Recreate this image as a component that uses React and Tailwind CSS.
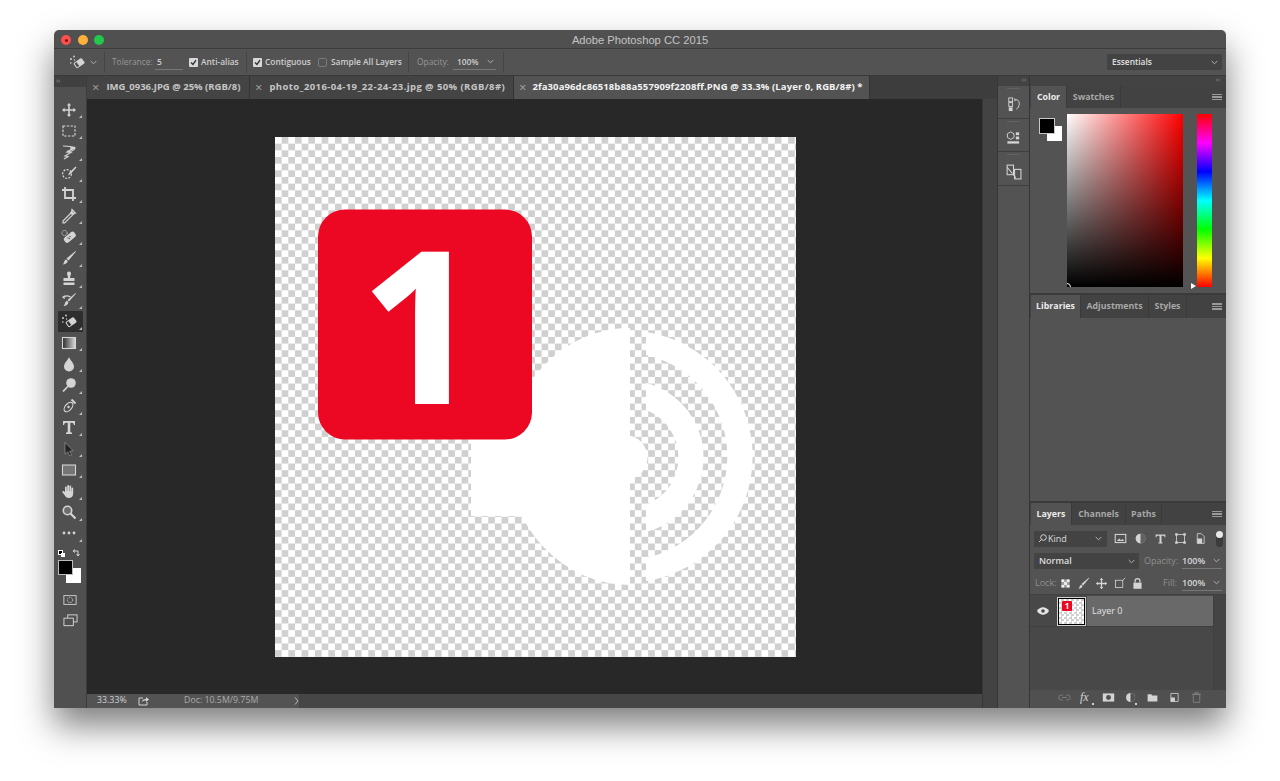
import React from "react";

const I = ({ children, s = 16, className = "" }) => (
  <svg width={s} height={s} viewBox="0 0 16 16" className={"shrink-0 " + className} fill="#d4d4d4" stroke="none">{children}</svg>
);
const line = { fill: "none", stroke: "#d4d4d4", strokeWidth: 1.2 };

const magic = (
  <g>
    <g transform="rotate(-35 10 9)">
      <rect x="5.500" y="6.500" width="9" height="5.500" rx="1" fill="none" stroke="#d4d4d4" />
      <rect x="8.500" y="6.500" width="6" height="5.500" rx="1" />
    </g>
    <circle cx="2" cy="5" r="1" />
    <circle cx="5" cy="2.500" r=".9" />
    <circle cx="1.800" cy="9" r=".8" />
    <circle cx="5.500" cy="6" r=".7" />
  </g>
);

const tools = [
  <path d="M8 1l2.200 2.600H8.800v3.600h3.600V5.800L15 8l-2.600 2.200V8.800H8.800v3.600h1.400L8 15l-2.200-2.600h1.400V8.800H3.600v1.400L1 8l2.600-2.200v1.400h3.600V3.600H5.800z" />,
  <rect x="2" y="3" width="12" height="10" fill="none" stroke="#d4d4d4" strokeWidth="1.200" strokeDasharray="2.400 1.400" />,
  <g><path d="M2 2c4 0 9 0 12 2-1 3-5 4-8 3" {...line} /><path d="M14 3l-8 5 4 .5-6 3.500 3 .5L3 15" {...line} /><path d="M9 3.500c2-1 4-1 5 .5l-4 2.500z" /></g>,
  <g><circle cx="6" cy="9" r="4.400" fill="none" stroke="#d4d4d4" strokeWidth="1.200" strokeDasharray="2 1.300" /><path d="M14.500 1.500l1 1-6 6.500-2.500 1.500 1-2.600z" /></g>,
  <g><path d="M4 1v11h11M1 4h11v11" fill="none" stroke="#d4d4d4" strokeWidth="1.800" /></g>,
  <g><path d="M11 1.500l3.500 3.500-2 1-.8.8-8 8H2v-1.800l8-8 .7-.7z" fill="none" stroke="#d4d4d4" strokeWidth="1.200" /><path d="M10.500 2.500l3 3-2.500 1.500-2-2z" /></g>,
  <g><rect x="2" y="5.500" width="13" height="6.400" rx="2.400" transform="rotate(-40 8 8)" /><circle cx="7" cy="9" r=".7" fill="#505050" /><circle cx="9" cy="7.500" r=".7" fill="#505050" /><circle cx="8.400" cy="9.600" r=".7" fill="#505050" /><circle cx="3.500" cy="4" r="2.600" fill="none" stroke="#d4d4d4" strokeDasharray="1.400 1" /></g>,
  <path d="M14.500 1L15 1.600 7.500 10.500 5.500 8.600zM5 9.400l1.800 1.700C6.500 13.500 4 14.500 1.500 14.500 3.400 13.400 3 10 5 9.400z" />,
  <path d="M6 2.500a2 2 0 014 0c0 1.600-1 2.400-1 4.500h4.500v3h-11V7H7c0-2.100-1-2.900-1-4.500zM2.500 11.500h11V14h-11z" />,
  <g><path d="M14.500 1L15 1.600 8 9.500 6.500 8zM6 8.800l1.400 1.400C7.200 12.500 5 14 2.500 14 4 13 4 9.300 6 8.800z" /><path d="M1.500 5.500C4 3.500 7 3.500 9.500 5M1.500 5.500l2.300-1.800M1.500 5.500l2.600.6" {...line} /></g>,
  magic,
  <g><rect x="1.500" y="2.500" width="13" height="11" fill="url(#gr)" stroke="#d4d4d4" strokeWidth="1.100" /></g>,
  <path d="M8 1c1 3 5 6 5 9.500a5 5 0 01-10 0C3 7 7 4 8 1z" />,
  <g><circle cx="10" cy="6" r="4.800" /><path d="M6.800 9.500L2 14.500" stroke="#d4d4d4" strokeWidth="1.800" /></g>,
  <g><ellipse cx="7.500" cy="9" rx="3.200" ry="5.600" transform="rotate(40 7.500 9)" {...line} /><circle cx="7.500" cy="9" r="1.200" /><path d="M10.500 1.500l4 4" stroke="#d4d4d4" strokeWidth="2" /></g>,
  <path d="M2 2h12v4h-1.100c-.2-1.600-.8-2.300-2.400-2.300H9.300v8.800c0 .8.500 1 1.700 1V15H5v-1.500c1.200 0 1.700-.2 1.700-1V3.700H5.500c-1.600 0-2.200.7-2.400 2.300H2z" />,
  <path d="M4 1.500l.1 11.600 2.700-2.400 2 4.300 1.800-.9-2-4.100 3.500-.3z" stroke="#d4d4d4" strokeWidth=".4" fill="#222" />,
  <rect x="1.500" y="3" width="13" height="10" fill="#757575" stroke="#d4d4d4" strokeWidth="1.100" />,
  <path d="M4 9V4.500a.9.900 0 011.800 0V8h.4V2.800a.9.900 0 011.800 0V8h.4V3.300a.9.900 0 011.800 0V8.400h.3V5a.9.900 0 011.700 0v5.500c0 3-2 4.500-4.500 4.500-2.100 0-3-1-4-2.700L1.500 9.400c-.6-1 .8-1.900 1.500-1z" />,
  <g><circle cx="6.500" cy="6.500" r="4.200" fill="#6d6d6d" stroke="#d4d4d4" strokeWidth="1.600" /><path d="M9.500 9.500l5 5" stroke="#d4d4d4" strokeWidth="2.200" /></g>,
  <g><circle cx="3" cy="8" r="1.400" /><circle cx="8" cy="8" r="1.400" /><circle cx="13" cy="8" r="1.400" /></g>,
];

function Tool({ children, active }) {
  return (
    <div className={"relative w-[25px] h-[21.2px] flex items-center justify-center rounded-[1px] " + (active ? "bg-[#2e2e2e]" : "")}>
      <I className="-translate-x-[1px]">{children}</I>
      <div className="absolute right-[1px] bottom-[2px] w-0 h-0 border-l-[3px] border-l-transparent border-b-[3px] border-b-[#c0c0c0]" />
    </div>
  );
}

function Toolbar() {
  return (
    <div className="w-[33px] shrink-0 bg-[#505050] border-r border-[#3c3c3c] flex flex-col items-center">
      <svg width="0" height="0" className="absolute">
        <defs>
          <linearGradient id="gr"><stop offset="0" stopColor="#2a2a2a" /><stop offset="1" stopColor="#dddddd" /></linearGradient>
        </defs>
      </svg>
      <div className="self-stretch h-[11px] bg-[#404040] text-[7px] leading-[9px] pl-[2px] text-[#999]">››</div>
      <div className="h-[12px]" />
      <div className="flex flex-col items-center">
        {tools.map((t, i) => (
          <Tool key={i} active={i === 10}>{t}</Tool>
        ))}
      </div>
      <div className="self-stretch relative h-[36px] mt-[4px]">
        <div className="absolute left-[4px] top-[2px] w-[5px] h-[5px] bg-black border border-white" />
        <div className="absolute left-[7px] top-[5px] w-[4px] h-[4px] bg-white" />
        <svg width="9" height="9" viewBox="0 0 9 9" className="absolute left-[18px] top-[1px]"><path d="M1 2h5v5M1 2l2-1.500M1 2l2 1.500M6 7L4.500 5M6 7l1.500-2" fill="none" stroke="#d4d4d4" /></svg>
        <div className="absolute left-[12px] top-[20px] w-[15px] h-[15px] bg-white" />
        <div className="absolute left-[4px] top-[12px] w-[15px] h-[15px] bg-black border border-[#bdbdbd]" />
      </div>
      <div className="h-[9px]" />
      <I s={14}><rect x="1" y="3" width="14" height="10" fill="none" stroke="#d4d4d4" /><circle cx="8" cy="8" r="3" fill="none" stroke="#d4d4d4" strokeDasharray="1.500 1" /></I>
      <div className="h-[6px]" />
      <I s={15}><rect x="5" y="2" width="10" height="7.500" fill="none" stroke="#d4d4d4" /><rect x="1" y="5.500" width="10" height="8" fill="#505050" stroke="#d4d4d4" /></I>
    </div>
  );
}

function Chevron({ className = "" }) {
  return (
    <svg width="7" height="5" viewBox="0 0 7 5" className={"shrink-0 " + className}><path d="M.7 1l2.800 2.800L6.300 1" fill="none" stroke="#b0b0b0" strokeWidth="1" /></svg>
  );
}

function Check() {
  return (
    <div className="w-[9px] h-[9px] shrink-0 rounded-[1px] bg-[#d8d8d8] flex items-center justify-center">
      <svg width="7" height="7" viewBox="0 0 7 7"><path d="M1 3.500l2 2L6 1.200" fill="none" stroke="#333" strokeWidth="1.400" /></svg>
    </div>
  );
}

function Divider({ ml, mr }) {
  return <div className={"w-px h-[21px] shrink-0 bg-[#454545] " + ml + " " + mr} />;
}

function OptionsBar() {
  return (
    <div className="h-[27px] shrink-0 bg-[#535353] border-b border-[#3a3a3a] flex items-center text-[8.400px] font-semibold text-[#cfcfcf] whitespace-nowrap">
      <div className="ml-[15px]"><I s={16}>{tools[10]}</I></div>
      <Chevron className="ml-[5px]" />
      <Divider ml="ml-[7px]" mr="mr-[7px]" />
      <span className="font-normal text-[#979797] w-[43px]">Tolerance:</span>
      <span className="w-[28px] border-b border-[#777] leading-[14px] pl-[2px]">5</span>
      <div className="w-[6px]" />
      <Check />
      <span className="ml-[3px] w-[40px]">Anti-alias</span>
      <Divider ml="ml-[5px]" mr="mr-[6px]" />
      <Check />
      <span className="ml-[3px] w-[49px]">Contiguous</span>
      <div className="ml-[4px] w-[9px] h-[9px] rounded-[2px] border border-[#7a7a7a]" />
      <span className="ml-[4px] w-[71px]">Sample All Layers</span>
      <Divider ml="ml-[6px]" mr="mr-[8px]" />
      <span className="font-normal text-[#979797] w-[36px]">Opacity:</span>
      <div className="w-[43px] border-b border-[#777] leading-[14px] pl-[4px] flex items-center justify-between pr-[2px]">
        <span>100%</span>
        <Chevron />
      </div>
      <Divider ml="ml-[7px]" mr="mr-0" />
      <div className="flex-1" />
      <div className="w-[115px] h-[16px] mr-[4px] bg-[#434343] rounded-[1px] flex items-center justify-between pl-[5px] pr-[4px] text-[#e0e0e0]">
        <span>Essentials</span>
        <Chevron />
      </div>
    </div>
  );
}

function DocTab({ w, label, active, gap }) {
  return (
    <div className={"h-[23px] flex items-center shrink-0 border-r border-[#333] text-[9.500px] font-bold whitespace-nowrap " + w + " " + (active ? "bg-[#535353] text-[#f2f2f2]" : "bg-[#444444] text-[#c6c6c6]")}>
      <span className="ml-[5px] text-[13px] font-normal text-[#a0a0a0] leading-none">×</span>
      <span className={gap}>{label}</span>
    </div>
  );
}

function Artwork() {
  return (
    <div className="w-[521px] h-[520px] shrink-0 ml-[188px] mt-[38px] bg-white bg-[repeating-conic-gradient(#d0d0d0_0_25%,#ffffff_0_50%)] bg-[length:13.33px_13.33px]">
      <svg width="521" height="520" viewBox="275 137 521 520" className="block">
        <path d="M471 430h70v86h-70z" fill="#fff" />
        <path d="M630 328A122 128.500 0 0 0 630 585z" fill="#fff" />
        <path d="M625 435a22 22 0 0 1 0 45z" fill="#fff" />
        <path d="M646 332A126 126 0 0 1 646 581V558A104 104 0 0 0 646 355z" fill="#fff" />
        <path d="M646 383A77 77 0 0 1 646 532V505A51 51 0 0 0 646 410z" fill="#fff" />
        <rect x="318" y="209.500" width="214" height="230" rx="27" fill="#ec0823" />
        <text x="421" y="403" textAnchor="middle" fontFamily="'Open Sans', sans-serif" fontWeight="700" fontSize="211" fill="#fff" stroke="#fff" strokeWidth="2">1</text>
      </svg>
    </div>
  );
}

function DocArea() {
  return (
    <div className="w-[910px] shrink-0 flex flex-col">
      <div className="h-[23px] shrink-0 flex bg-[#3d3d3d]">
        <DocTab w="w-[163px]" label="IMG_0936.JPG @ 25% (RGB/8)" gap="ml-[7px]" />
        <DocTab w="w-[264px]" label="photo_2016-04-19_22-24-23.jpg @ 50% (RGB/8#)" gap="ml-[7px] tracking-[0.4px]" />
        <DocTab w="w-[356px]" label="2fa30a96dc86518b88a557909f2208ff.PNG @ 33.3% (Layer 0, RGB/8#) *" active gap="ml-[6px] tracking-[0.1px]" />
      </div>
      <div className="flex-1 flex min-h-0 overflow-hidden">
        <div className="w-[895px] flex flex-col shrink-0">
          <div className="flex-1 bg-[#282828] min-h-0 flex items-start">
            <Artwork />
          </div>
          <div className="h-[14px] shrink-0 bg-[#464646] flex">
            <div className="w-[213px] bg-[#535353] border-r border-[#444] flex items-center text-[8.800px] text-[#cfcfcf]">
              <span className="ml-[10px] w-[41px]">33.33%</span>
              <svg width="11" height="10" viewBox="0 0 11 10"><path d="M5 2H1v7h8V6" fill="none" stroke="#d4d4d4" /><path d="M4 6c0-2 1.500-3 4-3V1l3 2.500L8 6V4.500c-2 0-3 .5-4 1.500z" fill="#d4d4d4" /></svg>
              <span className="ml-[35px] w-[110px] text-[#aaa]">Doc: 10.5M/9.75M</span>
              <svg width="5" height="8" viewBox="0 0 5 8"><path d="M1 .5L4 4 1 7.500" fill="none" stroke="#bbb" /></svg>
            </div>
          </div>
        </div>
        <div className="w-[15px] bg-[#434343] border-l border-[#363636]" />
      </div>
    </div>
  );
}

function DockGroup({ children, h = "h-[33px]" }) {
  return (
    <div className={"border-b border-[#3e3e3e] flex items-center justify-center pt-[5px] relative " + h}>
      <div className="absolute top-[2px] left-[9px] w-[13px] h-[1px] bg-[#626262]" />
      {children}
    </div>
  );
}

function Dock() {
  return (
    <div className="w-[33px] shrink-0 bg-[#535353] border-l border-[#363636] border-r flex flex-col">
      <div className="h-[10px] bg-[#434343] text-[7px] leading-[8px] text-[#999] text-right pr-[3px]">‹‹</div>
      <DockGroup>
        <I s={15}><rect x="3" y="1" width="4" height="4" fill="none" stroke="#d4d4d4" /><rect x="3" y="6" width="4" height="4" fill="none" stroke="#d4d4d4" /><rect x="3" y="11" width="4" height="4" /><path d="M9 3h3M10 3l-1 1.500M10 3L9 1.500M12 3c3 1 3 8-1 10" fill="none" stroke="#d4d4d4" /></I>
      </DockGroup>
      <DockGroup>
        <I s={15}><path d="M5 2l3.500 2v4L5 10 1.500 8V4z" fill="none" stroke="#d4d4d4" /><rect x="10.500" y="2.500" width="3.500" height="3" /><rect x="10.500" y="7" width="3.500" height="3" /><rect x="1.500" y="12" width="12.500" height="2.500" /></I>
      </DockGroup>
      <DockGroup h="h-[34px]">
        <I s={17}><rect x="2" y="2" width="6" height="9" fill="none" stroke="#d4d4d4" /><rect x="9" y="6" width="6" height="9" fill="none" stroke="#d4d4d4" /><path d="M2 4l5 6M8 11l2 3" fill="none" stroke="#d4d4d4" /></I>
      </DockGroup>
    </div>
  );
}

function Menu() {
  return (
    <div className="flex flex-col gap-[1px] w-[10px]">
      <div className="h-[1.500px] bg-[#9a9a9a]" />
      <div className="h-[1.500px] bg-[#9a9a9a]" />
      <div className="h-[1.500px] bg-[#9a9a9a]" />
    </div>
  );
}

function PanelTabs({ tabs, h = "h-[23px]" }) {
  return (
    <div className={"shrink-0 flex items-stretch bg-[#424242] text-[8.800px] font-bold pl-[1px] " + h}>
      {tabs.map(([label, w], i) => (
        <div key={label} className={"flex items-center justify-center border-r border-[#3a3a3a] pt-[1px] " + w + " " + (i === 0 ? "bg-[#535353] text-[#ececec]" : "text-[#a8a8a8]")}>{label}</div>
      ))}
      <div className="flex-1" />
      <div className="flex items-center pr-[4px]"><Menu /></div>
    </div>
  );
}

function ColorPanel() {
  return (
    <div className="h-[207px] shrink-0 flex flex-col bg-[#535353]">
      <PanelTabs h="h-[22px]" tabs={[["Color", "w-[36px]"], ["Swatches", "w-[54px]"]]} />
      <div className="flex-1 flex pt-[6px] pb-[6px]">
        <div className="relative w-[37px] shrink-0">
          <div className="absolute left-[17px] top-[12px] w-[15px] h-[15px] bg-white" />
          <div className="absolute left-[9px] top-[4px] w-[16px] h-[16px] bg-black border border-[#c8c8c8]" />
        </div>
        <div className="relative w-[116px] shrink-0 overflow-hidden bg-[linear-gradient(to_top,#000,transparent),linear-gradient(to_right,#fff,#f00)]">
          <div className="absolute -left-[4px] -bottom-[4px] w-[8px] h-[8px] rounded-full border border-white" />
        </div>
        <div className="relative w-[15px] ml-[14px] shrink-0 bg-[linear-gradient(to_bottom,#f00,#f0f,#00f,#0ff,#0f0,#ff0,#f00)]">
          <div className="absolute -left-[6px] -bottom-[2px] w-0 h-0 border-y-[3px] border-y-transparent border-l-[5px] border-l-white" />
        </div>
      </div>
    </div>
  );
}

const Glyph = ({ children, className = "" }) => <I s={13} className={className}>{children}</I>;

function LayersPanel() {
  return (
    <div className="flex-1 min-h-0 flex flex-col bg-[#535353]">
      <PanelTabs h="h-[22px]" tabs={[["Layers", "w-[41px]"], ["Channels", "w-[54px]"], ["Paths", "w-[36px]"]]} />
      <div className="h-[25px] shrink-0 flex items-center pl-[4px] pt-[2px]">
        <div className="w-[73px] h-[16px] bg-[#434343] flex items-center pl-[4px] pr-[5px] text-[9px] text-[#dedede] justify-between">
          <span className="flex items-center gap-[1px]">
            <svg width="9" height="9" viewBox="0 0 9 9"><circle cx="5.500" cy="3.500" r="2.800" fill="none" stroke="#d4d4d4" /><path d="M3.500 5.500L1 8" stroke="#d4d4d4" /></svg>
            Kind
          </span>
          <Chevron />
        </div>
        <div className="ml-[7px] flex items-center gap-[7px]">
          <Glyph><rect x="1.500" y="3" width="13" height="10" fill="none" stroke="#d4d4d4" strokeWidth="1.300" /><path d="M3.500 11l3-3 2 2 2-1.500 2 2.500z" /></Glyph>
          <Glyph><circle cx="8" cy="8" r="6" /><path d="M8 2a6 6 0 010 12z" fill="#606060" /></Glyph>
          <Glyph><path d="M2 3h12v3.500h-1c-.2-1.500-.8-2-2-2H9.200v7.800c0 .6.400.7 1.300.7V14h-5v-1c.9 0 1.300-.1 1.300-.7V4.500H5c-1.200 0-1.800.5-2 2H2z" /></Glyph>
          <Glyph><rect x="3" y="3" width="10" height="10" fill="none" stroke="#d4d4d4" /><rect x="1.500" y="1.500" width="3" height="3" /><rect x="11.500" y="1.500" width="3" height="3" /><rect x="1.500" y="11.500" width="3" height="3" /><rect x="11.500" y="11.500" width="3" height="3" /></Glyph>
          <Glyph><path d="M4 2h5l3.500 3.500V14H4z" fill="none" stroke="#d4d4d4" /><rect x="4" y="8" width="6" height="6" /></Glyph>
        </div>
        <div className="ml-[9px] relative w-[7px] h-[16px] rounded-full bg-[#3c3c3c]">
          <div className="absolute left-0 top-0 w-[7px] h-[7px] rounded-full bg-[#e8e8e8]" />
        </div>
      </div>
      <div className="h-[22px] shrink-0 flex items-center pl-[4px] text-[9px]">
        <div className="w-[105px] h-[16px] bg-[#434343] flex items-center pl-[5px] pr-[4px] text-[#dedede] justify-between font-semibold">
          <span>Normal</span>
          <Chevron />
        </div>
        <span className="ml-[5px] w-[38px] text-[#8f8f8f]">Opacity:</span>
        <div className="w-[40px] border-b border-[#777] flex items-center justify-between pr-[2px] text-[#d8d8d8] font-semibold leading-[14px]">
          <span>100%</span>
          <Chevron />
        </div>
      </div>
      <div className="h-[22px] shrink-0 flex items-center pl-[5px] text-[9px]">
        <span className="text-[#8f8f8f] w-[24px]">Lock:</span>
        <div className="flex items-center gap-[5px]">
          <Glyph><path d="M3 3h10v10H3z" fill="#a0a0a0" /><path d="M3 3h3.300v3.300H3zM9.600 3H13v3.300H9.600zM6.300 6.300h3.300v3.400H6.300zM3 9.700h3.300V13H3zM9.600 9.700H13V13H9.600z" fill="#f0f0f0" /></Glyph>
          <Glyph><path d="M14.500 1L15 1.600 7.500 10.500 5.500 8.600zM5 9.400l1.800 1.700C6.500 13.500 4 14.500 1.500 14.500 3.400 13.400 3 10 5 9.400z" /></Glyph>
          <Glyph>{tools[0]}</Glyph>
          <Glyph><rect x="3" y="4" width="9" height="9" fill="none" stroke="#d4d4d4" /><path d="M12 4l3-3" stroke="#d4d4d4" /></Glyph>
          <Glyph><rect x="3" y="7" width="10" height="7.500" /><path d="M5 7V5a3 3 0 016 0v2" fill="none" stroke="#d4d4d4" strokeWidth="1.500" /></Glyph>
        </div>
        <span className="ml-[19px] w-[19px] text-[#8f8f8f]">Fill:</span>
        <div className="w-[40px] border-b border-[#777] flex items-center justify-between pr-[2px] text-[#d8d8d8] font-semibold leading-[14px]">
          <span>100%</span>
          <Chevron />
        </div>
      </div>
      <div className="flex-1 min-h-0 flex bg-[#484848] border-t border-[#414141]">
        <div className="flex-1 min-w-0">
          <div className="h-[31px] flex items-stretch mt-[1px] border-b border-[#3f3f3f]">
            <div className="w-[26px] flex items-center justify-center">
              <svg width="12" height="8" viewBox="0 0 12 8"><path d="M0 4c3-5 9-5 12 0-3 5-9 5-12 0z" fill="#e6e6e6" /><circle cx="6" cy="4" r="1.800" fill="#484848" /></svg>
            </div>
            <div className="w-[31px] flex items-center justify-center">
              <div className="relative w-[27px] h-[27px] border border-black outline outline-1 outline-[#d0d0d0] bg-white bg-[repeating-conic-gradient(#d0d0d0_0_25%,#ffffff_0_50%)] bg-[length:5px_5px]">
                <div className="absolute left-[3px] top-[2px] w-[10px] h-[10px] bg-[#ec0823] rounded-[1px] flex items-center justify-center text-[8px] font-bold leading-none text-white">1</div>
              </div>
            </div>
            <div className="flex-1 bg-[#696969] flex items-center pl-[5px] text-[9px] text-[#e4e4e4]">Layer 0</div>
          </div>
        </div>
        <div className="w-[13px] shrink-0 bg-[#444444] border-l border-[#3f3f3f]" />
      </div>
      <div className="h-[18px] shrink-0 bg-[#505050] flex items-center pl-[28px] pb-[4px] gap-[9px]">
        <Glyph className="opacity-40"><path d="M6 5H4a3 3 0 000 6h2M10 5h2a3 3 0 010 6h-2M5 8h6" fill="none" stroke="#d4d4d4" /></Glyph>
        <span className="relative w-[13px] font-['Liberation_Serif',serif] italic text-[12px] leading-none text-[#d4d4d4]">
          fx
          <span className="absolute -right-[1px] -bottom-[2px] w-[2px] h-[2px] rounded-full bg-white" />
        </span>
        <Glyph><rect x="1" y="3" width="14" height="10" /><circle cx="8" cy="8" r="3" fill="#505050" /></Glyph>
        <span className="relative">
          <Glyph><circle cx="8" cy="8" r="5.500" /><path d="M8 2.500a5.500 5.500 0 010 11z" fill="#505050" /></Glyph>
          <span className="absolute right-0 -bottom-[1px] w-[2px] h-[2px] rounded-full bg-white" />
        </span>
        <Glyph><path d="M2 4h4.500l1.200 1.500H14V13H2z" /></Glyph>
        <Glyph><path d="M3.500 3h9v10h-9z" fill="none" stroke="#d4d4d4" /><rect x="3.500" y="8" width="5" height="5" /></Glyph>
        <Glyph className="opacity-40"><path d="M4 4h8v10H4zM2.500 4h11M6 4V2h4v2" fill="none" stroke="#d4d4d4" /></Glyph>
      </div>
    </div>
  );
}

function RightPanels() {
  return (
    <div className="flex-1 min-w-0 flex flex-col bg-[#3a3a3a]">
      <div className="h-[10px] shrink-0 bg-[#434343] text-[7px] leading-[8px] text-[#999] text-right pr-[6px]">››</div>
      <ColorPanel />
      <div className="h-[2px] shrink-0" />
      <div className="h-[206px] shrink-0 flex flex-col bg-[#535353]">
        <PanelTabs tabs={[["Libraries", "w-[50px]"], ["Adjustments", "w-[68px]"], ["Styles", "w-[38px]"]]} />
      </div>
      <div className="h-[2px] shrink-0" />
      <LayersPanel />
    </div>
  );
}

export default function App() {
  return (
    <div className="w-[1280px] h-[781px] overflow-hidden bg-white pt-[30px] pl-[54px] font-['Open_Sans',sans-serif]">
      <div className="w-[1172px] h-[678px] flex flex-col rounded-t-[5px] overflow-hidden shadow-[0_18px_34px_rgba(0,0,0,0.5)]">
        <div className="h-[19px] shrink-0 bg-[#505050] border-b border-[#3c3c3c] flex items-center pt-[2px]">
          <div className="w-[100px] flex items-center pl-[7px] gap-[6.500px]">
            <div className="w-[10px] h-[10px] rounded-full bg-[#fc4f4e] flex items-center justify-center"><div className="w-[3px] h-[3px] rounded-full bg-[#7d1410]" /></div>
            <div className="w-[10px] h-[10px] rounded-full bg-[#fdb13a]" />
            <div className="w-[10px] h-[10px] rounded-full bg-[#22c84a]" />
          </div>
          <div className="flex-1 text-center text-[11.200px] leading-[15px] text-[#c4c4c4] font-['Liberation_Sans',sans-serif]">Adobe Photoshop CC 2015</div>
          <div className="w-[100px]" />
        </div>
        <OptionsBar />
        <div className="flex-1 min-h-0 flex bg-[#3d3d3d]">
          <Toolbar />
          <DocArea />
          <Dock />
          <RightPanels />
        </div>
      </div>
    </div>
  );
}
